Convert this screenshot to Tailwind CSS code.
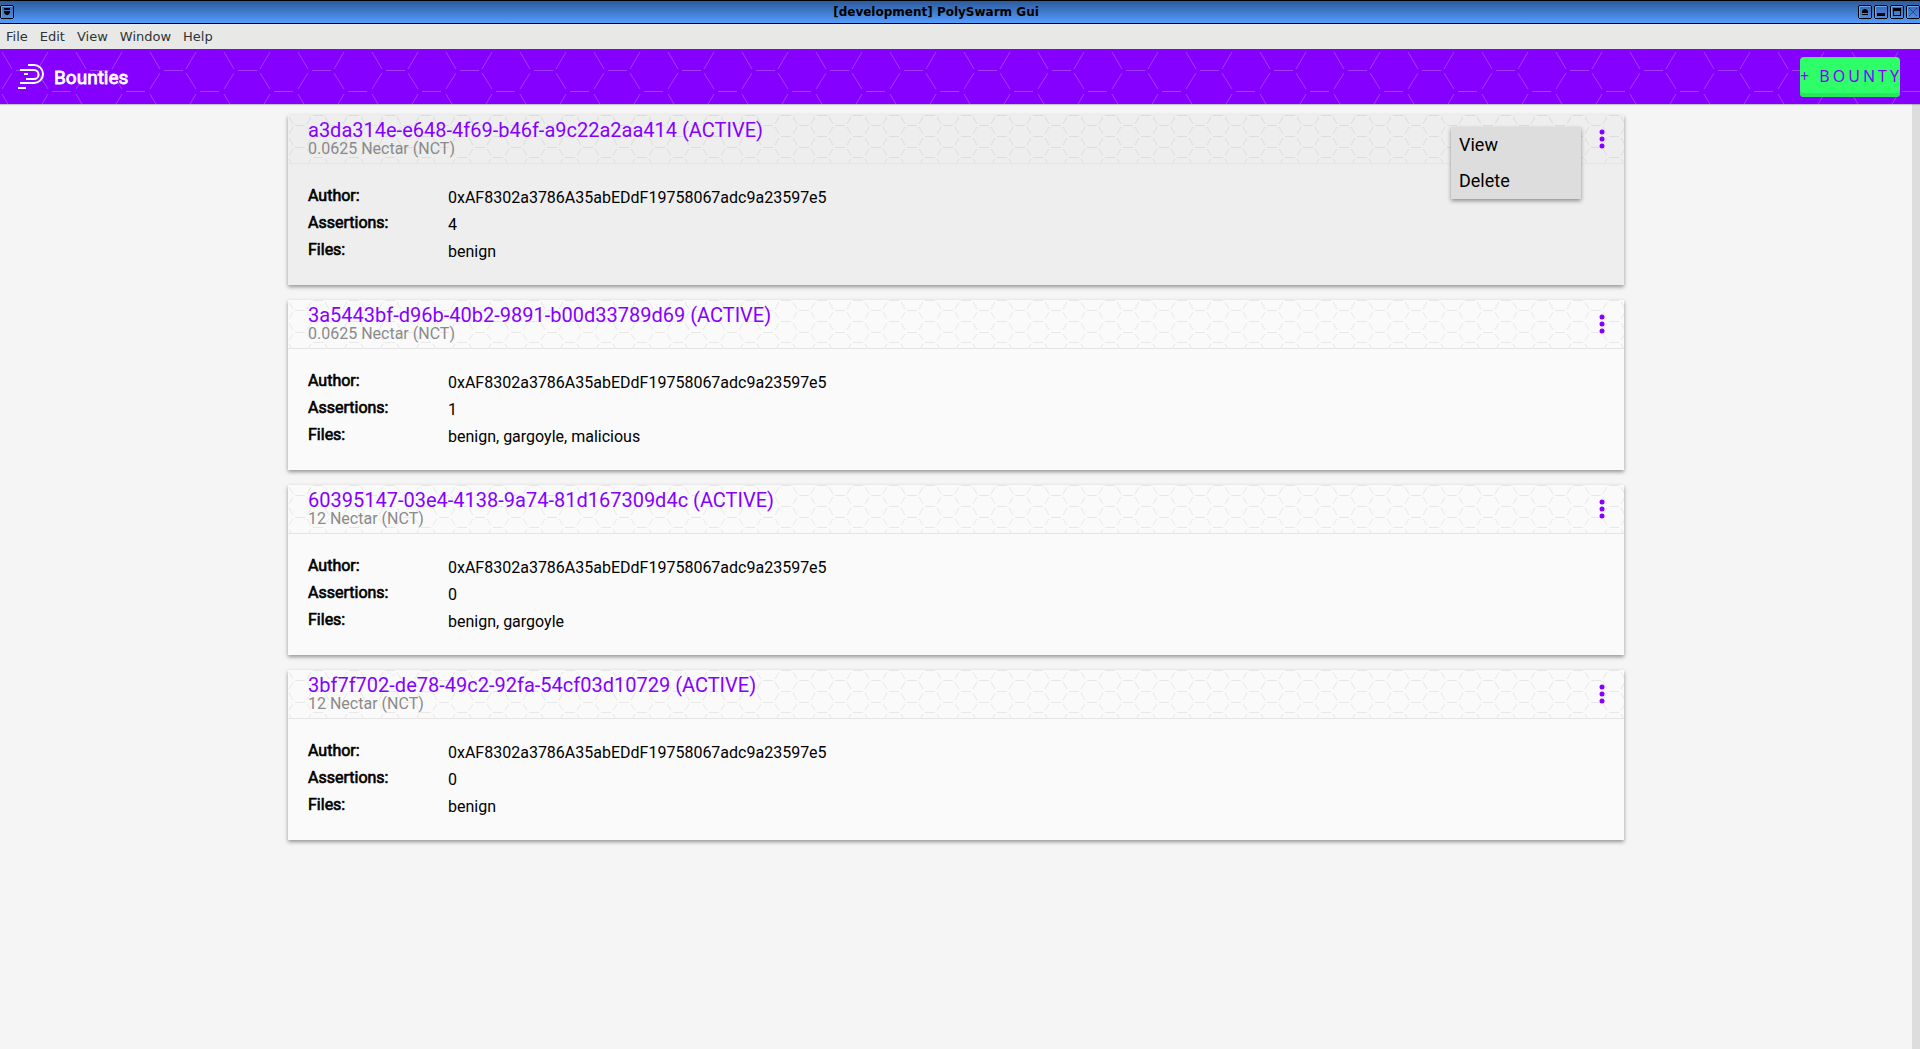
<!DOCTYPE html>
<html lang="en">
<head>
<meta charset="utf-8">
<title>[development] PolySwarm Gui</title>
<script src="https://cdn.jsdelivr.net/npm/@tailwindcss/browser@4"></script>
</head>
<body class="min-h-screen flex flex-col bg-[#f5f5f5] font-['Roboto',sans-serif] text-black">
<svg class="absolute size-0" aria-hidden="true">
  <defs>
    <pattern id="comb-lg" width="74" height="82" patternUnits="userSpaceOnUse">
      <path d="M2 3L12 20M48 3L38 20M16 21.5H35M12 24L2 40M38 24L48 40M52 42.5H71M48 45L38 62M2 45L12 62" fill="none" stroke="#a23dff" stroke-width="1"/>
    </pattern>
    <pattern id="comb-sm" y="1" width="36" height="42" patternUnits="userSpaceOnUse">
      <path d="M1 1L5 8M23 1L19 8M7 9.5H17M5 11L1 18M19 11L23 18M25 20.500H35M23 22L19 29M1 22L5 29M7 31.5H17M5 33L1 39M19 33L23 39M25 41.5H35" fill="none" stroke="#000" stroke-opacity=".07" stroke-width="1"/>
    </pattern>
    <symbol id="frame" viewBox="0 0 14 14">
      <path d="M1 .5H13M1 13.5H13M.5 1V13M13.5 1V13" stroke="#000"/>
      <path d="M1.5 12.500V1.500H12.500" stroke="#6aa5f0" fill="none"/>
    </symbol>
  </defs>
</svg>

<div class="flex h-6 items-center border-y border-black bg-linear-to-b from-[#2d5a9c] to-[#539dff] font-['DejaVu_Sans',sans-serif]">
  <button class="size-[14px]" aria-label="Window menu"><svg class="size-[14px]" viewBox="0 0 14 14"><use href="#frame"/><path d="M4 3H10V5H4ZM4 6H10V8L8 10H6L4 8Z"/></svg></button>
  <h1 class="flex-1 text-center text-[12px] font-bold leading-5">[development] PolySwarm Gui</h1>
  <div class="flex gap-[2px]">
    <button aria-label="Shade"><svg class="size-[14px]" viewBox="0 0 14 14"><use href="#frame"/><path d="M4 8V6L6 4H8L10 6V8ZM4 9H10V10H4Z"/></svg></button>
    <button aria-label="Minimize"><svg class="size-[14px]" viewBox="0 0 14 14"><use href="#frame"/><path d="M3 8H11V11H3Z"/></svg></button>
    <button aria-label="Maximize"><svg class="size-[14px]" viewBox="0 0 14 14"><use href="#frame"/><path d="M3 3H11V11H3ZM4 6V10H10V6Z" fill-rule="evenodd"/></svg></button>
    <button aria-label="Close"><svg class="size-[14px]" viewBox="0 0 14 14"><use href="#frame"/><path d="M3 3L11 11M11 3L3 11" stroke="#173b70" stroke-dasharray="2 1"/></svg></button>
  </div>
</div>

<nav class="flex h-[25px] items-center gap-3 bg-[#e8e8e6] px-[6px] font-['DejaVu_Sans',sans-serif] text-[13px] text-[#2e3436]">
  <button>File</button><button>Edit</button><button>View</button><button>Window</button><button>Help</button>
</nav>

<header class="relative z-10 flex h-[55px] items-center bg-[#8500ff] pl-[18px] pr-5 text-white shadow-[0_1px_1px_#0003]">
  <svg class="absolute inset-0 size-full" aria-hidden="true"><rect width="100%" height="100%" fill="url(#comb-lg)"/></svg>
  <svg class="relative mr-[10px] h-7 w-[26px]" viewBox="0 0 26 28" fill="none" stroke="#fff" stroke-width="2" aria-hidden="true"><path d="M10 2H16A9 9 0 0 1 16 20H2M2 7H16A4 4 0 0 1 16 16H8M6 11H10M0 25H8"/></svg>
  <h2 class="relative pt-1 text-[19px] font-normal [-webkit-text-stroke:0.04em]">Bounties</h2>
  <button class="relative ml-auto h-10 w-[100px] whitespace-nowrap rounded bg-[#2eff69] pb-[2px] font-['Noto_Sans',sans-serif] text-base tracking-[3px] text-[#8500ff] shadow-[inset_0_-4px_0_#29e65f]">+ BOUNTY</button>
</header>

<div class="flex flex-1">
  <main id="list" class="flex flex-1 flex-col gap-[15px] px-[15%] pt-[11px]"></main>
  <div class="w-2 bg-[#dddddd]"></div>
</div>

<template id="card">
  <article class="relative bg-[#fafafa] shadow-[0_2px_4px_#0006]">
    <div class="relative h-[49px] border-b border-[#e4e4e4] pl-5">
      <svg class="absolute inset-0 size-full" aria-hidden="true"><rect width="100%" height="100%" fill="url(#comb-sm)"/></svg>
      <h3 class="relative pt-[5px] text-[20px] leading-[21px]"><a href="#" class="text-[#8500ff]"></a></h3>
      <p class="relative text-base leading-4 text-[#8a8a8a]"></p>
      <button class="absolute right-[18px] top-[14px]" aria-label="Bounty menu"><svg class="h-5 w-2" viewBox="0 0 8 20" fill="#8500ff"><circle cx="4" cy="3" r="2.5"/><circle cx="4" cy="10" r="2.5"/><circle cx="4" cy="17" r="2.5"/></svg></button>
    </div>
    <table class="mb-5 ml-5 mt-5 text-base leading-[27px]">
      <tbody>
        <tr><th class="w-[140px] text-left align-top font-normal leading-6 [-webkit-text-stroke:0.04em]">Author:</th><td></td></tr>
        <tr><th class="text-left align-top font-normal leading-6 [-webkit-text-stroke:0.04em]">Assertions:</th><td></td></tr>
        <tr><th class="text-left align-top font-normal leading-6 [-webkit-text-stroke:0.04em]">Files:</th><td></td></tr>
      </tbody>
    </table>
  </article>
</template>
<template id="menu">
  <div class="absolute right-[43px] top-3 flex w-[130px] flex-col bg-[#dddddd] shadow-[0_2px_4px_#0006]">
    <button class="h-9 px-2 pb-[2px] text-left text-[18px]">View</button>
    <button class="h-9 px-2 pb-[2px] text-left text-[18px]">Delete</button>
  </div>
</template>
<script>
const author = '0xAF8302a3786A35abEDdF19758067adc9a23597e5';
const bounties = [
  ['a3da314e-e648-4f69-b46f-a9c22a2aa414', '0.0625', '4', 'benign', true],
  ['3a5443bf-d96b-40b2-9891-b00d33789d69', '0.0625', '1', 'benign, gargoyle, malicious'],
  ['60395147-03e4-4138-9a74-81d167309d4c', '12', '0', 'benign, gargoyle'],
  ['3bf7f702-de78-49c2-92fa-54cf03d10729', '12', '0', 'benign'],
];
for (const [id, amount, assertions, files, open] of bounties) {
  const card = document.getElementById('card').content.cloneNode(true);
  card.querySelector('a').textContent = `${id} (ACTIVE)`;
  card.querySelector('p').textContent = `${amount} Nectar (NCT)`;
  card.querySelectorAll('td').forEach((td, i) => td.textContent = [author, assertions, files][i]);
  if (open) {
    const article = card.querySelector('article');
    article.classList.replace('bg-[#fafafa]', 'bg-[#eeeeee]');
    article.append(document.getElementById('menu').content.cloneNode(true));
  }
  document.getElementById('list').append(card);
}
</script>
</body>
</html>
